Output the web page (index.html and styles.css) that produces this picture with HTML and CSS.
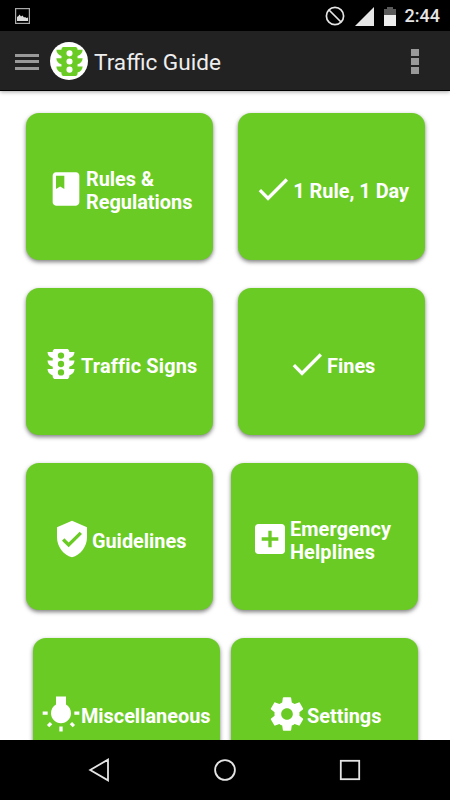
FILE: index.html
```
<!DOCTYPE html>
<html lang="en">
<head>
  <meta charset="UTF-8" />
  <title>Traffic Guide</title>
  <link rel="stylesheet" href="styles.css">
</head>
<body>
  <!-- Shared icons -->
  <svg class="sprite">
    <symbol id="check" viewBox="0 0 24 24">
      <path d="M9 16.17L4.83 12l-1.42 1.41L9 19 21 7l-1.41-1.41z" />
    </symbol>
    <symbol id="traffic" viewBox="0 0 24 24">
      <path fill-rule="evenodd" d="M7.4 2h9.2l.9 1.2V4H21c0 1.9-1.3 3.6-3.5 4.2v1.5H21c0 1.9-1.3 3.6-3.5 4.2v1.5H21c0 1.9-1.3 3.6-3.5 4.2v1.2L16.6 22H7.4l-.9-1.2v-1.2C4.3 19 3 17.3 3 15.4h3.5v-1.5C4.3 13.3 3 11.6 3 9.7h3.5V8.2C4.3 7.6 3 5.9 3 4h3.5v-.8zM12 19.7a2.1 2.1 0 1 0 0-4.2 2.1 2.1 0 0 0 0 4.2zm0-5.6a2.1 2.1 0 1 0 0-4.2 2.1 2.1 0 0 0 0 4.2zm0-5.6a2.1 2.1 0 1 0 0-4.2 2.1 2.1 0 0 0 0 4.2z" />
    </symbol>
  </svg>

  <div class="status-bar">
    <svg class="picture" viewBox="0 0 15 16">
      <rect x=".6" y=".6" width="13.8" height="14.8" fill="none" stroke="#aaa" stroke-width="1.2" />
      <path d="M2 13V9l1.5-1 1-1.5L6 8.5l1.5-1L9 9.5l1-.5 1.5 1 1.5-.5V13z" fill="#ddd" />
    </svg>
    <div class="status-icons">
      <svg width="20" height="20" viewBox="0 0 20 20">
        <circle cx="10" cy="10" r="8.6" fill="none" stroke="#e4e4e4" stroke-width="1.7" />
        <path d="M4 4l12 12" stroke="#e4e4e4" stroke-width="1.7" />
      </svg>
      <svg width="19" height="19" viewBox="0 0 19 19">
        <path d="M0 19L19 0v19z" fill="#e6e6e6" />
      </svg>
      <svg width="12" height="19" viewBox="0 0 12 19">
        <path d="M0 2h3V0h6v2h3v6H0z" fill="#5a5a5a" />
        <path d="M0 8h12v11H0z" fill="#eee" />
      </svg>
      <span class="clock">2:44</span>
    </div>
  </div>

  <header class="action-bar">
    <div class="menu"><i></i><i></i><i></i></div>
    <div class="logo"><svg><use href="#traffic" /></svg></div>
    <h1>Traffic Guide</h1>
    <div class="overflow"><i></i><i></i><i></i></div>
  </header>

  <main>
    <div class="row">
      <div class="card">
        <svg viewBox="0 0 24 24"><path d="M18 2H6c-1.1 0-2 .9-2 2v16c0 1.1.9 2 2 2h12c1.1 0 2-.9 2-2V4c0-1.1-.9-2-2-2zM6 4h5v8l-2.5-1.5L6 12V4z" /></svg>
        <span>Rules &amp;<br>Regulations</span>
      </div>
      <div class="card">
        <svg><use href="#check" /></svg>
        <span>1 Rule, 1 Day</span>
      </div>
    </div>
    <div class="row">
      <div class="card">
        <svg class="small"><use href="#traffic" /></svg>
        <span class="spaced">Traffic Signs</span>
      </div>
      <div class="card">
        <svg><use href="#check" /></svg>
        <span>Fines</span>
      </div>
    </div>
    <div class="row row-close">
      <div class="card">
        <svg viewBox="0 0 24 24"><path d="M12 1L3 5v6c0 5.55 3.84 10.74 9 12 5.16-1.26 9-6.45 9-12V5l-9-4zm-2 16l-4-4 1.41-1.41L10 14.17l6.59-6.59L18 9l-8 8z" /></svg>
        <span>Guidelines</span>
      </div>
      <div class="card card-wide">
        <svg viewBox="0 0 24 24"><path d="M19 3H5c-1.1 0-2 .9-2 2v14c0 1.1.9 2 2 2h14c1.1 0 2-.9 2-2V5c0-1.1-.9-2-2-2zm-2 10h-4v4h-2v-4H7v-2h4V7h2v4h4v2z" /></svg>
        <span class="spaced">Emergency<br>Helplines</span>
      </div>
    </div>
    <div class="row row-last">
      <div class="card">
        <svg viewBox="0 0 24 24"><path d="M3.55 18.54l1.41 1.41 1.8-1.79-1.41-1.41-1.8 1.79zM11 22.45h2V19.5h-2v2.95zM4 10.5H1v2h3v-2zm11-4.19V1.5H9v4.81C7.21 7.35 6 9.28 6 11.5c0 3.31 2.69 6 6 6s6-2.69 6-6c0-2.22-1.21-4.15-3-5.19zm5 4.19v2h3v-2h-3zm-2.76 7.66l1.79 1.8 1.41-1.41-1.8-1.79-1.4 1.4z" /></svg>
        <span>Miscellaneous</span>
      </div>
      <div class="card">
        <svg viewBox="0 0 24 24"><path d="M19.43 12.98c.04-.32.07-.64.07-.98s-.03-.66-.07-.98l2.11-1.65c.19-.15.24-.42.12-.64l-2-3.46c-.12-.22-.39-.3-.61-.22l-2.49 1c-.52-.4-1.08-.73-1.69-.98l-.38-2.65C14.46 2.18 14.25 2 14 2h-4c-.25 0-.46.18-.49.42l-.38 2.65c-.61.25-1.17.59-1.69.98l-2.49-1c-.23-.09-.49 0-.61.22l-2 3.46c-.13.22-.07.49.12.64l2.11 1.65c-.04.32-.07.65-.07.98s.03.66.07.98l-2.11 1.65c-.19.15-.24.42-.12.64l2 3.46c.12.22.39.3.61.22l2.49-1c.52.4 1.08.73 1.69.98l.38 2.65c.03.24.24.42.49.42h4c.25 0 .46-.18.49-.42l.38-2.65c.61-.25 1.17-.59 1.69-.98l2.49 1c.23.09.49 0 .61-.22l2-3.46c.12-.22.07-.49-.12-.64l-2.11-1.65zM12 15.5c-1.93 0-3.5-1.57-3.5-3.5s1.57-3.5 3.5-3.5 3.5 1.57 3.5 3.5-1.57 3.5-3.5 3.5z" /></svg>
        <span>Settings</span>
      </div>
    </div>
  </main>

  <nav class="nav-bar">
    <svg viewBox="0 0 24 24"><path d="M20 1.6v20.8L2.2 12z" /></svg>
    <svg viewBox="0 0 24 24"><circle cx="12" cy="12" r="9.9" /></svg>
    <svg viewBox="0 0 24 24"><rect x="2.8" y="2.8" width="18.4" height="18.4" /></svg>
  </nav>
</body>
</html>
```
FILE: styles.css
```
* {
  box-sizing: border-box;
}

body {
  margin: 0;
  width: 450px;
  height: 800px;
  overflow: hidden;
  display: flex;
  flex-direction: column;
  background: #fff;
  font-family: Roboto, sans-serif;
}

.sprite {
  display: none;
}

/* Status bar */
.status-bar {
  flex: none;
  height: 31px;
  padding: 1px 10px 0 15px;
  display: flex;
  align-items: center;
  justify-content: space-between;
  background: #000;
}

.picture {
  width: 15px;
  height: 16px;
}

.status-icons {
  display: flex;
  align-items: center;
  gap: 10px;
}

.clock {
  color: #e6e6e6;
  font-size: 18px;
  font-weight: 500;
  line-height: 20px;
  margin-left: -1px;
}

/* Action bar */
.action-bar {
  flex: none;
  height: 60px;
  padding: 1px 31px 0 15px;
  display: flex;
  align-items: center;
  background: #222;
  border-bottom: 1px solid #000;
  box-shadow: 0 1px 4px rgba(0, 0, 0, 0.35);
  z-index: 1;
}

.menu {
  display: grid;
  gap: 3.5px;
  width: 24px;
  padding-top: 1px;
}

.menu i {
  height: 3px;
  background: #999;
}

.logo {
  width: 38px;
  height: 38px;
  margin-left: 11px;
  border-radius: 50%;
  background: #fff;
  display: flex;
  align-items: center;
  justify-content: center;
}

.logo svg {
  width: 35px;
  height: 35px;
  fill: #6acb24;
}

h1 {
  margin: 0 auto 0 6px;
  padding-top: 2px;
  color: #eee;
  font-size: 22.6px;
  font-weight: 400;
}

.overflow {
  display: grid;
  gap: 2px;
}

.overflow i {
  width: 8px;
  height: 7px;
  background: #999;
}

/* Cards */
main {
  flex: 1;
  min-height: 0;
  overflow: hidden;
  padding-top: 21.5px;
  display: flex;
  flex-direction: column;
  gap: 28px;
}

.row {
  flex: none;
  display: flex;
  gap: 25px;
  padding-left: 26px;
}

.row-close {
  gap: 18px;
}

.row-last {
  gap: 11.5px;
  padding-left: 32.5px;
}

.card {
  width: 187px;
  height: 147px;
  padding: 6px 0.6px 0 0;
  display: flex;
  align-items: center;
  justify-content: center;
  border-radius: 13px;
  background: #6acb24;
  box-shadow: 0 2px 4px rgba(0, 0, 0, 0.5);
  color: #fff;
  font-size: 19.9px;
  font-weight: 700;
  line-height: 23px;
}

.card svg {
  width: 40px;
  height: 40px;
  fill: #fff;
}

.card .small {
  width: 36px;
  height: 36px;
  margin: 0 2px;
}

.card span {
  padding-top: 4px;
  font-variant-ligatures: none;
}

.card .spaced {
  letter-spacing: 0.15px;
}

.card-wide {
  padding-right: 8px;
}

/* Navigation bar */
.nav-bar {
  flex: none;
  height: 60px;
  padding: 0 38px;
  display: flex;
  align-items: center;
  justify-content: space-around;
  background: #000;
  z-index: 1;
}

.nav-bar svg {
  width: 24px;
  height: 24px;
  fill: none;
  stroke: #e4e4e4;
  stroke-width: 1.8;
}
```
